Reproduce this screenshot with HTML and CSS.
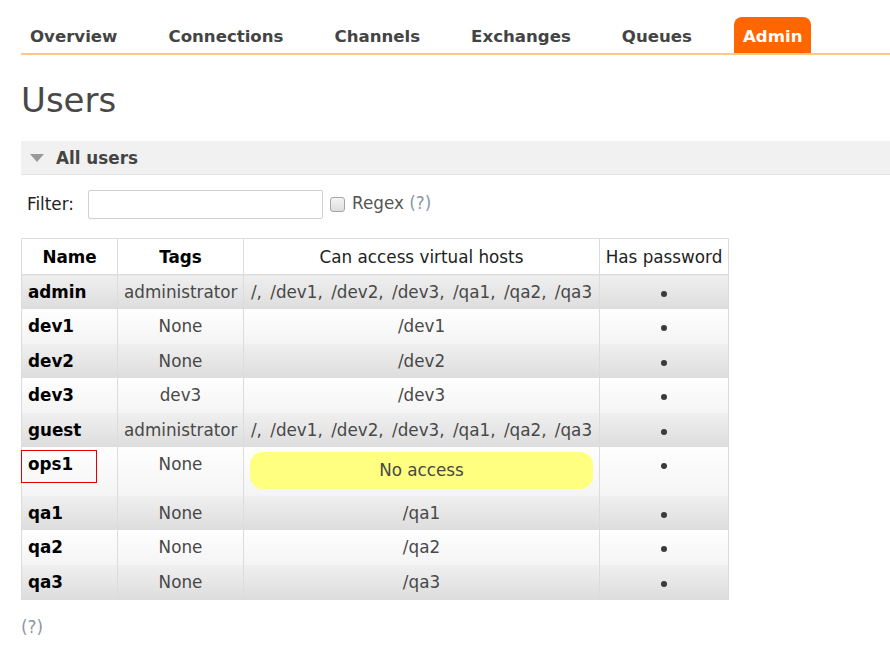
FILE: index.html
```html
<!DOCTYPE html>
<html>
<head>
<meta charset="utf-8">
<link rel="stylesheet" href="styles.css">
</head>
<body>
<div class="page">
  <ul class="tabs">
    <li><a>Overview</a></li>
    <li><a>Connections</a></li>
    <li><a>Channels</a></li>
    <li><a>Exchanges</a></li>
    <li><a>Queues</a></li>
    <li class="active"><a>Admin</a></li>
  </ul>
  <h1 class="title">Users</h1>
  <div class="section-head"><span class="tri"></span><span class="section-title">All users</span></div>
  <div class="filter">
    <label class="filter-label">Filter:</label>
    <input class="filter-input" type="text">
    <span class="check"></span>
    <span class="regex">Regex <span class="help">(?)</span></span>
  </div>
  <table class="users">
    <thead>
      <tr>
        <th class="c-name bold">Name</th>
        <th class="c-tags bold">Tags</th>
        <th class="c-vh">Can access virtual hosts</th>
        <th class="c-pw">Has password</th>
      </tr>
    </thead>
    <tbody>
      <tr class="alt1"><td class="name">admin</td><td>administrator</td><td class="list">/, /dev1, /dev2, /dev3, /qa1, /qa2, /qa3</td><td><span class="dot"></span></td></tr>
      <tr class="alt2"><td class="name">dev1</td><td>None</td><td>/dev1</td><td><span class="dot"></span></td></tr>
      <tr class="alt1"><td class="name">dev2</td><td>None</td><td>/dev2</td><td><span class="dot"></span></td></tr>
      <tr class="alt2"><td class="name">dev3</td><td>dev3</td><td>/dev3</td><td><span class="dot"></span></td></tr>
      <tr class="alt1"><td class="name">guest</td><td>administrator</td><td class="list">/, /dev1, /dev2, /dev3, /qa1, /qa2, /qa3</td><td><span class="dot"></span></td></tr>
      <tr class="alt2"><td class="name marked">ops1<span class="mark"></span></td><td>None</td><td class="pillcell"><div class="pill">No access</div></td><td><span class="dot"></span></td></tr>
      <tr class="alt1"><td class="name">qa1</td><td>None</td><td>/qa1</td><td><span class="dot"></span></td></tr>
      <tr class="alt2"><td class="name">qa2</td><td>None</td><td>/qa2</td><td><span class="dot"></span></td></tr>
      <tr class="alt1"><td class="name">qa3</td><td>None</td><td>/qa3</td><td><span class="dot"></span></td></tr>
    </tbody>
  </table>
  <div class="foot-help">(?)</div>
</div>
</body>
</html>
```

FILE: styles.css
```css
html, body {
  margin: 0;
  padding: 0;
  background: #fff;
}
body {
  font-family: "DejaVu Sans", Verdana, sans-serif;
  font-size: 16.8px;
  color: #484848;
}
.page {
  padding-left: 21px;
}
.tabs {
  list-style: none;
  margin: 17px 0 0 0;
  padding: 0;
  display: flex;
  border-bottom: 2px solid #fcc986;
  height: 36px;
}
.tabs li {
  margin-right: 33px;
  display: flex;
}
.tabs li a {
  display: block;
  padding: 3px 9px 0 9px;
  font-weight: bold;
  font-size: 16.6px;
  line-height: 33px;
  color: #444;
  border-radius: 8px 8px 0 0;
}
.tabs li.active a {
  background: #ff6600;
  color: #fff;
}
.title {
  margin: 25px 0 0 0;
  font-size: 34px;
  font-weight: normal;
  line-height: 40px;
  color: #484848;
}
.section-head {
  margin-top: 21px;
  height: 33px;
  background: #f1f1f1;
  border-bottom: 1px solid #e2e2e2;
  display: flex;
  align-items: center;
}
.tri {
  width: 0;
  height: 0;
  margin-left: 9px;
  margin-right: 12px;
  border-left: 7.5px solid transparent;
  border-right: 7.5px solid transparent;
  border-top: 8px solid #9a9a9a;
}
.section-title {
  font-weight: bold;
  color: #444;
  font-size: 16.8px;
}
.filter {
  display: flex;
  align-items: center;
  margin-top: 14px;
  height: 30px;
}
.filter-label {
  margin-left: 6px;
  color: #222;
  width: 61px;
}
.filter-input {
  width: 235px;
  height: 29px;
  box-sizing: border-box;
  border: 1px solid #d0d0d0;
  border-radius: 2px;
  margin: 0;
  padding: 0;
}
.check {
  width: 13px;
  height: 13px;
  margin-left: 7px;
  border: 1px solid #a6a6a6;
  border-radius: 3px;
  background: linear-gradient(#f4f4f4, #dedede);
}
.regex {
  margin-left: 7px;
  color: #555;
  margin-top: -3px;
}
.help {
  color: #8a97a8;
}
.users {
  margin-top: 19px;
  border-collapse: collapse;
  border: 1px solid #dcdcdc;
  table-layout: fixed;
  width: 707px;
}
.users th {
  font-weight: normal;
  color: #222;
  height: 35px;
  padding: 0;
  border-left: 1px solid #dcdcdc;
  border-bottom: 1px solid #dcdcdc;
  background: #fff;
}
.users th.bold {
  font-weight: bold;
  color: #000;
}
.c-name { width: 95px; }
.c-tags { width: 125px; }
.c-vh { width: 355px; }
.c-pw { width: 128px; }
.users td {
  border-left: 1px solid #dcdcdc;
  text-align: center;
  vertical-align: top;
  padding: 5px 6px;
  line-height: 24.4px;
  white-space: nowrap;
}
.users td.list {
  word-spacing: 3px;
}
.users td.name {
  text-align: left;
  font-weight: bold;
  color: #000;
  padding-left: 6px;
}
.users tr.alt1 td {
  background: linear-gradient(#efefef, #dddddd);
}
.users tr.alt2 td {
  background: linear-gradient(#fefefe, #f4f4f4);
}
.dot {
  display: inline-block;
  width: 6px;
  height: 6px;
  border-radius: 50%;
  background: #3a3a3a;
  vertical-align: middle;
  margin-top: 2px;
}
.users td.marked {
  position: relative;
}
.mark {
  position: absolute;
  left: -1px;
  top: 3px;
  width: 74px;
  height: 31px;
  border: 1px solid #e00000;
}
.users td.pillcell {
  padding-bottom: 7px;
}
.pill {
  background: #ffff80;
  border-radius: 13px;
  line-height: 23px;
  padding: 7px 0;
  color: #484848;
}
.foot-help {
  margin-top: 17px;
  color: #8a97a8;
}
```
